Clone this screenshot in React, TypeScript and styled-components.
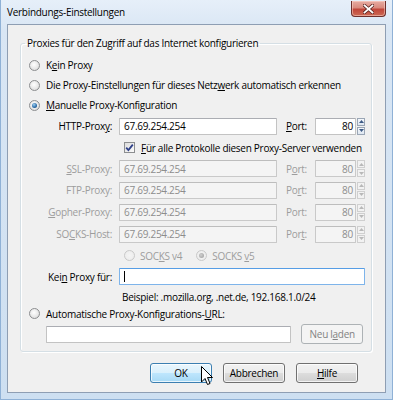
import React from "react";
import styled, { createGlobalStyle, css } from "styled-components";

const Global = createGlobalStyle`
  html, body { margin: 0; padding: 0; }
  body {
    width: 393px; height: 400px; overflow: hidden;
    font-family: "Open Sans", "Noto Sans", sans-serif;
    font-size: 10px; letter-spacing: -0.28px; color: #000;
  }
`;

const Window = styled.div`
  position: relative;
  box-sizing: border-box;
  width: 393px;
  height: 400px;
  display: flex;
  flex-direction: column;
  padding: 0 6px 6px 6px;
  border: 1px solid #8fb1d6;
  border-top: none;
  background: linear-gradient(180deg, #e6eff9 0px, #d9e6f4 30px, #cddff1 100%);
`;

const TitleBar = styled.div`
  height: 24px;
  display: flex;
  justify-content: space-between;
  align-items: flex-start;
`;

const Title = styled.span`
  font-size: 10px;
  line-height: 25px;
  color: #000;
`;

const CloseBtn = styled.div`
  box-sizing: border-box;
  width: 35px;
  height: 16px;
  margin-top: 1px;
  border: 1px solid #6d2f2c;
  border-top: none;
  border-radius: 0 0 4px 4px;
  background: linear-gradient(180deg, #e7aca2 0%, #d98a7e 45%, #c1463a 55%, #cc6a55 100%);
  box-shadow: inset 0 0 0 1px rgba(255, 220, 210, 0.5);
  display: flex;
  align-items: center;
  justify-content: center;
`;

const Client = styled.div`
  flex: 1;
  display: flex;
  flex-direction: column;
  border: 1px solid #8e9eb3;
  background: #f0f0f0;
  padding: 0 13px 0 12px;
`;

const Group = styled.fieldset`
  margin: 10px 0 0 0;
  padding: 0;
  min-inline-size: auto;
  border: 1px solid #d5dfe5;
  border-radius: 3px;
  box-shadow: inset 1px 1px 0 #fff, 1px 1px 0 #fff;
`;

const Legend = styled.legend`
  margin-left: 4px;
  padding: 0 2px;
  font-size: 10px;
  line-height: 16px;
`;

const GroupBody = styled.div`
  display: flex;
  flex-direction: column;
  padding: 4px 8px 4px 8px;
`;

const Row = styled.div<{ $h: number }>`
  height: ${(p) => p.$h}px;
  display: flex;
  align-items: center;
  gap: 6px;
  white-space: nowrap;
`;

const Key = styled.span`
  text-decoration: underline;
  text-underline-offset: 1px;
`;

const Label = styled.span<{ $disabled?: boolean }>`
  color: ${(p) => (p.$disabled ? "#9d9d9d" : "#000")};
  white-space: nowrap;
`;

const RadioDot = styled.span<{ $checked?: boolean; $disabled?: boolean; $ml?: number }>`
  box-sizing: border-box;
  flex: none;
  width: 11px;
  height: 11px;
  margin-left: ${(p) => p.$ml ?? 0}px;
  border-radius: 50%;
  border: 1px solid ${(p) => (p.$disabled ? "#c9c9c9" : "#8c8e90")};
  background: ${(p) =>
    p.$disabled
      ? "radial-gradient(circle at 50% 50%, #f4f4f4 0%, #eaeaea 100%)"
      : "radial-gradient(circle at 45% 40%, #ffffff 0%, #e6e6e6 60%, #d2d2d2 100%)"};
  display: flex;
  align-items: center;
  justify-content: center;
  &::after {
    content: "";
    display: ${(p) => (p.$checked ? "block" : "none")};
    width: 5px;
    height: 5px;
    border-radius: 50%;
    background: ${(p) =>
      p.$disabled
        ? "radial-gradient(circle at 40% 40%, #d0d0d0, #9a9a9a)"
        : "radial-gradient(circle at 40% 35%, #9fd0f2, #2a6aa6 60%, #173f66)"};
  }
`;

const CheckBox = styled.span`
  box-sizing: border-box;
  flex: none;
  width: 11px;
  height: 11px;
  border: 1px solid #8c8e90;
  background: linear-gradient(135deg, #dcdcdc 0%, #fbfbfb 100%);
  display: flex;
  align-items: center;
  justify-content: center;
`;

const ProxyGrid = styled.div`
  display: grid;
  grid-template-columns: 90px 158px 38px 50px;
  align-items: center;
`;

const GridLabel = styled.span<{ $disabled?: boolean; $port?: boolean }>`
  flex: 1;
  color: ${(p) => (p.$disabled ? "#9d9d9d" : "#000")};
  white-space: nowrap;
  text-align: ${(p) => (p.$port ? "left" : "right")};
  padding: ${(p) => (p.$port ? "0 0 0 9px" : "0 7px 0 0")};
`;

const Cell = styled.div<{ $h: number; $span?: string; $pl?: number; $gap?: number }>`
  height: ${(p) => p.$h}px;
  display: flex;
  align-items: center;
  grid-column: ${(p) => p.$span ?? "auto"};
  padding-left: ${(p) => p.$pl ?? 0}px;
  gap: ${(p) => p.$gap ?? 6}px;
  white-space: nowrap;
`;

const TextBox = styled.div<{ $disabled?: boolean; $focused?: boolean; $w?: number }>`
  box-sizing: border-box;
  height: 17px;
  width: ${(p) => (p.$w ? `${p.$w}px` : "100%")};
  display: flex;
  align-items: center;
  padding: 0 4px;
  background: ${(p) => (p.$disabled ? "#f4f4f4" : "#fff")};
  border: 1px solid
    ${(p) => (p.$focused ? "#7eb4ea" : p.$disabled ? "#c9c9c9" : "#c3c3c3")};
  border-top-color: ${(p) => (p.$focused ? "#569de5" : p.$disabled ? "#bdbdbd" : "#abadb3")};
  color: ${(p) => (p.$disabled ? "#8d8d8d" : "#000")};
  border-radius: 1px;
`;

const PortWrap = styled.div`
  display: flex;
  align-items: center;
  gap: 1px;
  width: 100%;
`;

const PortBox = styled(TextBox)`
  flex: 1;
  justify-content: flex-end;
  padding-right: 2px;
`;

const Spinner = styled.div`
  display: flex;
  flex-direction: column;
  gap: 1px;
  width: 8px;
  height: 17px;
  justify-content: center;
`;

const SpinHalf = styled.div<{ $disabled?: boolean }>`
  box-sizing: border-box;
  height: 8px;
  border: 1px solid ${(p) => (p.$disabled ? "#cfcfcf" : "#9aa6b5")};
  background: ${(p) =>
    p.$disabled ? "#f2f2f2" : "linear-gradient(180deg, #f5f8fc, #dfe7f1)"};
  display: flex;
  align-items: center;
  justify-content: center;
`;

const Caret = styled.span`
  width: 1px;
  height: 11px;
  background: #000;
`;

const PushButton = styled.button<{ $variant?: "default" | "hot" | "disabled" }>`
  box-sizing: border-box;
  width: 62px;
  height: 20px;
  padding: 0;
  font-family: inherit;
  font-size: 10px;
  letter-spacing: inherit;
  border-radius: 3px;
  border: 1px solid #707070;
  color: #000;
  background: linear-gradient(180deg, #f2f2f2 0%, #ebebeb 50%, #dddddd 51%, #cfcfcf 100%);
  box-shadow: inset 0 0 0 1px rgba(255, 255, 255, 0.75);
  ${(p) =>
    p.$variant === "hot" &&
    css`
      border-color: #3c7fb1;
      background: linear-gradient(180deg, #eaf6fd 0%, #d9f0fc 50%, #bee6fd 51%, #a7d9f5 100%);
    `}
  ${(p) =>
    p.$variant === "disabled" &&
    css`
      border-color: #adb2b5;
      color: #838383;
      background: #f4f4f4;
      box-shadow: none;
    `}
`;

const UrlRow = styled.div`
  height: 26px;
  display: flex;
  align-items: center;
  padding-left: 17px;
  gap: 10px;
`;

const ButtonBar = styled.div`
  display: flex;
  justify-content: flex-end;
  gap: 11px;
  padding: 11px 14px 0 0;
`;

const Cursor = styled.svg`
  position: absolute;
  left: 200px;
  top: 366px;
`;

const Spin = ({ disabled }: { disabled?: boolean }) => {
  const c = disabled ? "#b8b8b8" : "#3d5a85";
  return (
    <Spinner>
      <SpinHalf $disabled={disabled}>
        <svg width="5" height="3" viewBox="0 0 5 3">
          <path d="M0 3 L2.5 0 L5 3 Z" fill={c} />
        </svg>
      </SpinHalf>
      <SpinHalf $disabled={disabled}>
        <svg width="5" height="3" viewBox="0 0 5 3">
          <path d="M0 0 L2.5 3 L5 0 Z" fill={c} />
        </svg>
      </SpinHalf>
    </Spinner>
  );
};

type ProxyDef = {
  label: React.ReactNode;
  port: React.ReactNode;
  h: number;
  disabled?: boolean;
};

const proxies: ProxyDef[] = [
  { label: <><Key>S</Key>SL-Proxy:</>, port: <>P<Key>o</Key>rt:</>, h: 21, disabled: true },
  { label: <>FTP-Proxy:</>, port: <>Po<Key>r</Key>t:</>, h: 22, disabled: true },
  { label: <><Key>G</Key>opher-Proxy:</>, port: <>Port:</>, h: 22, disabled: true },
  { label: <>SO<Key>C</Key>KS-Host:</>, port: <>Por<Key>t</Key>:</>, h: 22, disabled: true },
];

const ProxyLine = ({ p }: { p: ProxyDef }) => (
  <>
    <Cell $h={p.h}>
      <GridLabel $disabled={p.disabled}>{p.label}</GridLabel>
    </Cell>
    <Cell $h={p.h}>
      <TextBox $disabled={p.disabled}>67.69.254.254</TextBox>
    </Cell>
    <Cell $h={p.h}>
      <GridLabel $disabled={p.disabled} $port>{p.port}</GridLabel>
    </Cell>
    <Cell $h={p.h}>
      <PortWrap>
        <PortBox $disabled={p.disabled}>80</PortBox>
        <Spin disabled={p.disabled} />
      </PortWrap>
    </Cell>
  </>
);

export default function App() {
  return (
    <>
      <Global />
      <Window>
        <TitleBar>
          <Title>Verbindungs-Einstellungen</Title>
          <CloseBtn>
            <svg width="11" height="10" viewBox="0 0 11 10">
              <path d="M1.5 1.5 L9.5 8.5 M9.5 1.5 L1.5 8.5" stroke="#5a2420" strokeWidth="3.4" strokeLinecap="square" />
              <path d="M1.5 1.5 L9.5 8.5 M9.5 1.5 L1.5 8.5" stroke="#ffffff" strokeWidth="1.8" strokeLinecap="square" />
            </svg>
          </CloseBtn>
        </TitleBar>
        <Client>
          <Group>
            <Legend>Proxies für den Zugriff auf das Internet konfigurieren</Legend>
            <GroupBody>
              <Row $h={20}>
                <RadioDot />
                <Label>K<Key>e</Key>in Proxy</Label>
              </Row>
              <Row $h={20}>
                <RadioDot />
                <Label>Die Proxy-Einstellungen für dieses Netz<Key>w</Key>erk automatisch erkennen</Label>
              </Row>
              <Row $h={20}>
                <RadioDot $checked />
                <Label><Key>M</Key>anuelle Proxy-Konfiguration</Label>
              </Row>
              <ProxyGrid>
                <Cell $h={22}>
                  <GridLabel>HTTP-Prox<Key>y</Key>:</GridLabel>
                </Cell>
                <Cell $h={22}>
                  <TextBox>67.69.254.254</TextBox>
                </Cell>
                <Cell $h={22}>
                  <GridLabel $port><Key>P</Key>ort:</GridLabel>
                </Cell>
                <Cell $h={22}>
                  <PortWrap>
                    <PortBox>80</PortBox>
                    <Spin />
                  </PortWrap>
                </Cell>

                <Cell $h={21} $span="2 / 5" $pl={5}>
                  <CheckBox>
                    <svg width="9" height="9" viewBox="0 0 9 9">
                      <path d="M1.2 4.6 L3.4 7 L7.8 1.6" fill="none" stroke="#2f4189" strokeWidth="1.8" />
                    </svg>
                  </CheckBox>
                  <Label><Key>F</Key>ür alle Protokolle diesen Proxy-Server verwenden</Label>
                </Cell>

                {proxies.map((p, i) => (
                  <ProxyLine key={i} p={p} />
                ))}

                <Cell $h={21} $span="2 / 5" $pl={5} $gap={5}>
                  <RadioDot $disabled />
                  <Label $disabled>SOC<Key>K</Key>S v4</Label>
                  <RadioDot $disabled $checked $ml={9} />
                  <Label $disabled>SOCKS <Key>v</Key>5</Label>
                </Cell>

                <Cell $h={21}>
                  <GridLabel>Kei<Key>n</Key> Proxy für:</GridLabel>
                </Cell>
                <Cell $h={21} $span="2 / 5">
                  <TextBox $focused>
                    <Caret />
                  </TextBox>
                </Cell>

                <Cell $h={19} $span="2 / 5" $pl={3}>
                  <Label>Beispiel: .mozilla.org, .net.de, 192.168.1.0/24</Label>
                </Cell>
              </ProxyGrid>
              <Row $h={15}>
                <RadioDot />
                <Label>Automatische Proxy-Konfigurations-<Key>U</Key>RL:</Label>
              </Row>
              <UrlRow>
                <TextBox $w={247} />
                <PushButton $variant="disabled" type="button">
                  Neu l<Key>a</Key>den
                </PushButton>
              </UrlRow>
            </GroupBody>
          </Group>
          <ButtonBar>
            <PushButton $variant="hot" type="button">OK</PushButton>
            <PushButton type="button">Abbrechen</PushButton>
            <PushButton type="button"><Key>H</Key>ilfe</PushButton>
          </ButtonBar>
        </Client>
        <Cursor width="13" height="20" viewBox="0 0 13 20">
          <path
            d="M0.5 0.5 L0.5 16 L4 12.5 L6.5 18.5 L9 17.5 L6.5 11.5 L11.5 11.5 Z"
            fill="#fff"
            stroke="#000"
            strokeWidth="1"
            strokeLinejoin="round"
          />
        </Cursor>
      </Window>
    </>
  );
}
